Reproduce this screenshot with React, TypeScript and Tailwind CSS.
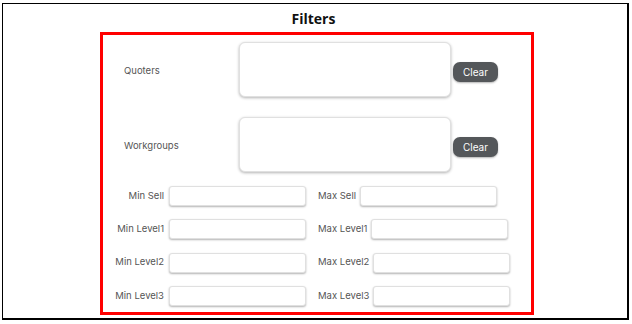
const labelFont = { fontFamily: 'Inter, "Open Sans", sans-serif' }

function AreaRow({ label, className = '' }: { label: string; className?: string }) {
  return (
    <div className={`flex items-center ${className}`}>
      <span className="w-[136px] shrink-0 pl-[21px] pt-[3px] text-[9.5px] text-[#555]">{label}</span>
      <div className="h-[55px] w-[212px] shrink-0 rounded-[6px] border border-[#e0e0e0] bg-white shadow-[0_1px_3px_rgba(0,0,0,0.3)]" />
      <button className="ml-[2px] mt-[5px] h-[20px] w-[45px] shrink-0 rounded-[7px] bg-[#54575a] text-[10px] text-white shadow-[0_1px_2px_rgba(0,0,0,0.3)]">
        Clear
      </button>
    </div>
  )
}

function Input({ className = '' }: { className?: string }) {
  return <div className={`h-[20px] w-[137px] shrink-0 rounded-[3px] border border-[#e0e0e0] bg-white shadow-[0_1px_2px_rgba(0,0,0,0.3)] ${className}`} />
}

const ranges = [
  ['Min Sell', 'Max Sell'],
  ['Min Level1', 'Max Level1'],
  ['Min Level2', 'Max Level2'],
  ['Min Level3', 'Max Level3'],
]

export default function App() {
  return (
    <div className="h-[324px] w-[632px] overflow-hidden bg-white pl-[2px] pt-[3px]" style={labelFont}>
      <div className="h-[317px] w-[627px] border-l border-t border-b-2 border-r-2 border-black">
        <div className="flex h-[28px] items-center justify-center pr-[3px] text-[14px] font-bold text-[#111]" style={{ fontFamily: '"Open Sans", sans-serif' }}>
          Filters
        </div>
        <div className="ml-[97px] h-[283px] w-[434px] border-[3px] border-[#ff0000] pt-[7px]">
          <AreaRow label="Quoters" />
          <AreaRow label="Workgroups" className="mt-[20px]" />
          <div className="mt-[14px] flex flex-col gap-[13.3px]">
            {ranges.map(([min, max]) => (
              <div key={min} className="flex items-center text-[9.5px] text-[#555]">
                <span className="w-[61px] shrink-0 text-right">{min}</span>
                <Input className="ml-[5px]" />
                <span className="ml-[12px]">{max}</span>
                <Input className="ml-[4px]" />
              </div>
            ))}
          </div>
        </div>
      </div>
    </div>
  )
}
